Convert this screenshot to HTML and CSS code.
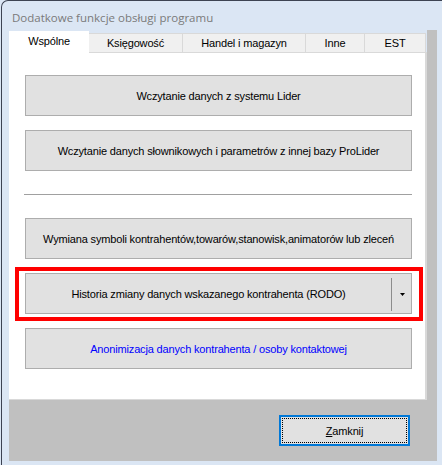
FILE: index.html
```html
<!DOCTYPE html>
<html lang="pl">
<head>
    <meta charset="utf-8">
    <link rel="stylesheet" href="styles.css">
</head>
<body>
    <div class="window">
        <div class="titlebar">Dodatkowe funkcje obsługi programu</div>

        <div class="client">
            <div class="tabctl">
                <div class="tabs">
                    <div class="tab active" style="width: 80px;">Wspólne</div>
                    <div class="tab" style="width: 94px;">Księgowość</div>
                    <div class="tab" style="width: 123px;">Handel i magazyn</div>
                    <div class="tab" style="width: 59px;">Inne</div>
                    <div class="tab" style="width: 61px;">EST</div>
                </div>

                <div class="panel">
                    <button class="btn">Wczytanie danych z systemu Lider</button>
                    <button class="btn gap">Wczytanie danych słownikowych i parametrów z innej bazy ProLider</button>

                    <div class="separator"></div>

                    <button class="btn after-sep">Wymiana symboli kontrahentów,towarów,stanowisk,animatorów lub zleceń</button>

                    <div class="highlight">
                        <div class="btn split">
                            <span class="split-label">Historia zmiany danych wskazanego kontrahenta (RODO)</span>
                            <span class="split-arrow">
                                <svg width="5" height="3" viewBox="0 0 5 3"><path d="M0 0h5L2.5 3z" fill="#000"/></svg>
                            </span>
                        </div>
                    </div>

                    <button class="btn link after-hl">Anonimizacja danych kontrahenta / osoby kontaktowej</button>
                </div>
            </div>

            <div class="footer">
                <button class="btn-close"><u>Z</u>amknij</button>
            </div>
        </div>
    </div>
</body>
</html>
```

FILE: styles.css
```css
* {
    margin: 0;
    padding: 0;
    box-sizing: border-box;
}

:root {
    --frame: #dbe6f4;
    --frame-edge: #3d4352;
    --face: #e1e1e1;
    --face-border: #adadad;
    --tab-border: #d9d9d9;
    --client: #c0c0c0;
}

html, body {
    width: 442px;
    height: 465px;
    overflow: hidden;
    background: var(--frame);
}

body {
    font-family: 'Liberation Sans', Arial, sans-serif;
    font-size: 11px;
    letter-spacing: -0.16px;
    color: #000;
}

.window {
    margin-left: 1px;
    width: 450px;
    height: 470px;
    background: var(--frame);
    border-left: 1px solid var(--frame-edge);
    border-top: 1px solid var(--frame-edge);
    border-top-left-radius: 7px;
}

.titlebar {
    height: 29px;
    padding: 9px 0 0 10px;
    font-family: 'Segoe UI', 'Open Sans', sans-serif;
    font-size: 11.5px;
    letter-spacing: 0;
    color: #7a7a7a;
}

.client {
    margin-left: 7px;
    width: 428px;
    height: 431px;
    background: var(--client);
}

.tabctl {
    width: 418px;
    height: 370px;
    background: var(--frame);
    display: flex;
    flex-direction: column;
}

.tabs {
    height: 22px;
    display: flex;
    align-items: flex-end;
}

.tab {
    height: 19px;
    background: #f0f0f0;
    border: 1px solid var(--tab-border);
    border-bottom: none;
    border-left: none;
    display: flex;
    align-items: center;
    justify-content: center;
    padding-bottom: 1px;
}

.tab.active {
    height: 22px;
    margin-bottom: -1px;
    background: #fff;
    border: none;
    position: relative;
    z-index: 1;
    padding-bottom: 3px;
}

.panel {
    height: 348px;
    background: #fff;
    border-top: 1px solid var(--tab-border);
    border-right: 2px solid var(--tab-border);
    border-bottom: 1px solid var(--tab-border);
    padding: 22px 0 0 16px;
    display: flex;
    flex-direction: column;
    align-items: flex-start;
}

.btn {
    width: 387px;
    height: 41px;
    background: var(--face);
    border: 1px solid var(--face-border);
    font-family: inherit;
    font-size: 11px;
    letter-spacing: inherit;
    color: #000;
    display: flex;
    align-items: center;
    justify-content: center;
    padding-top: 1px;
}

.btn.gap {
    margin-top: 14px;
}

.separator {
    width: 388px;
    height: 1px;
    margin: 23px 0 0 -1px;
    background: #a0a0a0;
}

.btn.after-sep {
    margin-top: 23px;
}

.highlight {
    margin: 8px 0 0 -10px;
    padding: 2px 7px 3px 6px;
    border: 4px solid #ff0000;
}

.btn.split {
    justify-content: flex-start;
}

.split-label {
    width: 366px;
    text-align: center;
}

.split-arrow {
    width: 20px;
    height: 33px;
    border-left: 1px solid #8c8c8c;
    display: flex;
    align-items: center;
    justify-content: center;
    padding: 0 0 0 1px;
}

.split-arrow svg {
    display: block;
}

.btn.after-hl {
    margin-top: 7px;
}

.btn.link {
    color: #0000ff;
}

.footer {
    padding: 15px 0 0 270px;
}

.btn-close {
    width: 131px;
    height: 31px;
    background: var(--face);
    border: 2px solid #0078d7;
    outline: 1px dotted #000;
    outline-offset: -4px;
    font-family: inherit;
    font-size: 11px;
    letter-spacing: inherit;
    color: #000;
}

.btn-close u {
    text-underline-offset: 1px;
}
```
